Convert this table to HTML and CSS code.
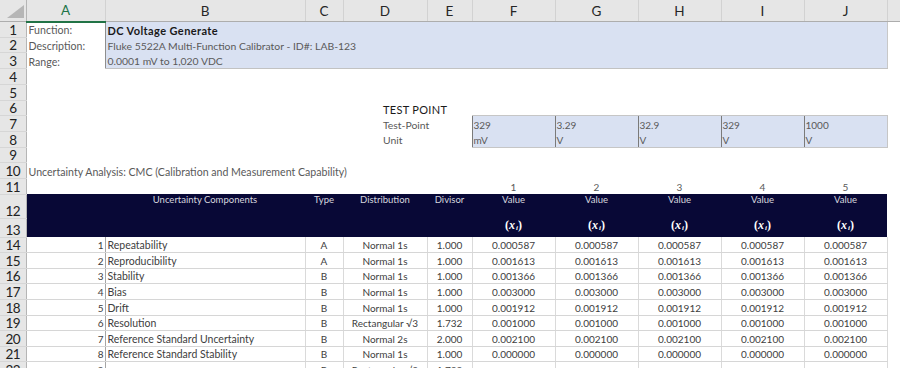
FILE: index.html
```html
<!DOCTYPE html>
<html lang="en">
<head>
    <meta charset="UTF-8">
    <meta name="viewport" content="width=device-width, initial-scale=1.0">
    <title>CMC Uncertainty - DC Voltage Generate</title>
    <link rel="stylesheet" href="styles.css">
</head>
<body>
    <table class="sheet">
        <colgroup>
            <col class="w-rh"><col class="w-a"><col class="w-b"><col class="w-c"><col class="w-d"><col class="w-e">
            <col class="w-v"><col class="w-v"><col class="w-v"><col class="w-v"><col class="w-v"><col class="w-k">
        </colgroup>
        <thead>
            <tr class="col-heads">
                <th class="corner"><svg width="26" height="21" viewBox="0 0 26 21"><polygon points="24,5 24,18 7,18" fill="#b6b6b6"/></svg></th>
                <th class="sel">A</th><th>B</th><th>C</th><th>D</th><th>E</th>
                <th>F</th><th>G</th><th>H</th><th>I</th><th>J</th><th></th>
            </tr>
        </thead>
        <tbody>
            <!-- 基本信息 -->
            <tr class="r">
                <th class="rh">1</th>
                <td class="lbl">Function:</td>
                <td class="fill fl title">DC Voltage Generate</td>
                <td class="fill"></td><td class="fill"></td><td class="fill"></td><td class="fill"></td>
                <td class="fill"></td><td class="fill"></td><td class="fill"></td><td class="fill fr"></td>
                <td class="k"></td>
            </tr>
            <tr class="r">
                <th class="rh">2</th>
                <td class="lbl">Description:</td>
                <td class="fill fl">Fluke 5522A Multi-Function Calibrator - ID#: LAB-123</td>
                <td class="fill"></td><td class="fill"></td><td class="fill"></td><td class="fill"></td>
                <td class="fill"></td><td class="fill"></td><td class="fill"></td><td class="fill fr"></td>
                <td class="k"></td>
            </tr>
            <tr class="r fill-end">
                <th class="rh">3</th>
                <td class="lbl">Range:</td>
                <td class="fill fl">0.0001 mV to 1,020 VDC</td>
                <td class="fill"></td><td class="fill"></td><td class="fill"></td><td class="fill"></td>
                <td class="fill"></td><td class="fill"></td><td class="fill"></td><td class="fill fr"></td>
                <td class="k"></td>
            </tr>
            <tr class="r"><th class="rh">4</th><td colspan="11"></td></tr>
            <tr class="r"><th class="rh">5</th><td colspan="11"></td></tr>

            <!-- 测试点 -->
            <tr class="r">
                <th class="rh">6</th>
                <td colspan="3"></td>
                <td class="tp-head">TEST POINT</td>
                <td colspan="7"></td>
            </tr>
            <tr class="r tp-top">
                <th class="rh">7</th>
                <td colspan="3"></td>
                <td class="tp-label">Test-Point</td>
                <td></td>
                <td class="tp">329</td><td class="tp">3.29</td><td class="tp">32.9</td><td class="tp">329</td><td class="tp tr">1000</td>
                <td class="k"></td>
            </tr>
            <tr class="r tp-bottom">
                <th class="rh">8</th>
                <td colspan="3"></td>
                <td class="tp-label">Unit</td>
                <td></td>
                <td class="tp">mV</td><td class="tp">V</td><td class="tp">V</td><td class="tp">V</td><td class="tp tr">V</td>
                <td class="k"></td>
            </tr>
            <tr class="r"><th class="rh">9</th><td colspan="11"></td></tr>
            <tr class="r">
                <th class="rh">10</th>
                <td class="lbl">Uncertainty Analysis: CMC (Calibration and Measurement Capability)</td>
                <td colspan="10"></td>
            </tr>
            <tr class="r">
                <th class="rh">11</th>
                <td colspan="5"></td>
                <td class="num">1</td><td class="num">2</td><td class="num">3</td><td class="num">4</td><td class="num">5</td>
                <td class="k"></td>
            </tr>

            <!-- 表头 -->
            <tr class="band-top">
                <th class="rh">12</th>
                <td class="band"></td>
                <td class="band">Uncertainty Components</td>
                <td class="band">Type</td>
                <td class="band">Distribution</td>
                <td class="band">Divisor</td>
                <td class="band">Value</td><td class="band">Value</td><td class="band">Value</td><td class="band">Value</td><td class="band">Value</td>
                <td class="k"></td>
            </tr>
            <tr class="band-bottom">
                <th class="rh">13</th>
                <td class="band" colspan="5"></td>
                <td class="band"><span class="xi">(<i>x</i><sub>i</sub>)</span></td>
                <td class="band"><span class="xi">(<i>x</i><sub>i</sub>)</span></td>
                <td class="band"><span class="xi">(<i>x</i><sub>i</sub>)</span></td>
                <td class="band"><span class="xi">(<i>x</i><sub>i</sub>)</span></td>
                <td class="band"><span class="xi">(<i>x</i><sub>i</sub>)</span></td>
                <td class="k"></td>
            </tr>

            <!-- 不确定度分量 -->
            <tr class="d">
                <th class="rh">14</th>
                <td class="ca">1</td><td class="cb">Repeatability</td><td class="cc">A</td><td class="cc">Normal 1s</td><td class="cc">1.000</td>
                <td class="cc">0.000587</td><td class="cc">0.000587</td><td class="cc">0.000587</td><td class="cc">0.000587</td><td class="cc">0.000587</td>
                <td class="k"></td>
            </tr>
            <tr class="d">
                <th class="rh">15</th>
                <td class="ca">2</td><td class="cb">Reproducibility</td><td class="cc">A</td><td class="cc">Normal 1s</td><td class="cc">1.000</td>
                <td class="cc">0.001613</td><td class="cc">0.001613</td><td class="cc">0.001613</td><td class="cc">0.001613</td><td class="cc">0.001613</td>
                <td class="k"></td>
            </tr>
            <tr class="d">
                <th class="rh">16</th>
                <td class="ca">3</td><td class="cb">Stability</td><td class="cc">B</td><td class="cc">Normal 1s</td><td class="cc">1.000</td>
                <td class="cc">0.001366</td><td class="cc">0.001366</td><td class="cc">0.001366</td><td class="cc">0.001366</td><td class="cc">0.001366</td>
                <td class="k"></td>
            </tr>
            <tr class="d">
                <th class="rh">17</th>
                <td class="ca">4</td><td class="cb">Bias</td><td class="cc">B</td><td class="cc">Normal 1s</td><td class="cc">1.000</td>
                <td class="cc">0.003000</td><td class="cc">0.003000</td><td class="cc">0.003000</td><td class="cc">0.003000</td><td class="cc">0.003000</td>
                <td class="k"></td>
            </tr>
            <tr class="d">
                <th class="rh">18</th>
                <td class="ca">5</td><td class="cb">Drift</td><td class="cc">B</td><td class="cc">Normal 1s</td><td class="cc">1.000</td>
                <td class="cc">0.001912</td><td class="cc">0.001912</td><td class="cc">0.001912</td><td class="cc">0.001912</td><td class="cc">0.001912</td>
                <td class="k"></td>
            </tr>
            <tr class="d">
                <th class="rh">19</th>
                <td class="ca">6</td><td class="cb">Resolution</td><td class="cc">B</td><td class="cc">Rectangular √3</td><td class="cc">1.732</td>
                <td class="cc">0.001000</td><td class="cc">0.001000</td><td class="cc">0.001000</td><td class="cc">0.001000</td><td class="cc">0.001000</td>
                <td class="k"></td>
            </tr>
            <tr class="d">
                <th class="rh">20</th>
                <td class="ca">7</td><td class="cb">Reference Standard Uncertainty</td><td class="cc">B</td><td class="cc">Normal 2s</td><td class="cc">2.000</td>
                <td class="cc">0.002100</td><td class="cc">0.002100</td><td class="cc">0.002100</td><td class="cc">0.002100</td><td class="cc">0.002100</td>
                <td class="k"></td>
            </tr>
            <tr class="d">
                <th class="rh">21</th>
                <td class="ca">8</td><td class="cb">Reference Standard Stability</td><td class="cc">B</td><td class="cc">Normal 1s</td><td class="cc">1.000</td>
                <td class="cc">0.000000</td><td class="cc">0.000000</td><td class="cc">0.000000</td><td class="cc">0.000000</td><td class="cc">0.000000</td>
                <td class="k"></td>
            </tr>
            <tr class="d">
                <th class="rh">22</th>
                <td class="ca">9</td><td class="cb"></td><td class="cc">B</td><td class="cc">Rectangular √3</td><td class="cc">1.732</td>
                <td class="cc"></td><td class="cc"></td><td class="cc"></td><td class="cc"></td><td class="cc"></td>
                <td class="k"></td>
            </tr>
        </tbody>
    </table>
</body>
</html>
```

FILE: styles.css
```css
body {
    margin: 0;
    background-color: #fff;
    font-family: Lato, "Liberation Sans", sans-serif;
    overflow: hidden;
}
.sheet {
    border-collapse: collapse;
    table-layout: fixed;
    width: 900px;
    font-size: 10px;
    color: #404040;
}
.sheet td, .sheet th {
    padding: 0 2px;
    white-space: nowrap;
    overflow: visible;
    vertical-align: bottom;
    font-weight: normal;
    line-height: 13px;
}
.w-rh { width: 26px; }
.w-a { width: 79px; }
.w-b { width: 200px; }
.w-c { width: 38px; }
.w-d { width: 84px; }
.w-e { width: 45px; }
.w-v { width: 83px; }
.w-k { width: 13px; }

/* 列标题 */
.col-heads th {
    height: 20px;
    padding: 0;
    background-color: #e6e6e6;
    border-right: 1px solid #d2d2d2;
    border-bottom: 1px solid #adadad;
    font-size: 13.5px;
    color: #262626;
    text-align: center;
    vertical-align: middle;
    line-height: 20px;
}
.col-heads th.sel {
    color: #217346;
    border-bottom: 2px solid #217346;
}
.col-heads th.corner {
    border-right-color: #b5b5b5;
}
.corner svg {
    display: block;
}

/* 行号 */
.sheet th.rh {
    padding: 0;
    background-color: #e6e6e6;
    border-right: 1px solid #b5b5b5;
    border-bottom: 1px solid #d6d6d6;
    font-size: 13.5px;
    letter-spacing: -0.6px;
    color: #222;
    text-align: center;
    vertical-align: bottom;
    line-height: 14px;
}
tr.r { height: 15.73px; }
tr.band-top { height: 24px; }
tr.band-bottom { height: 18.7px; }
tr.d { height: 15.6px; }

/* 基本信息 */
.lbl {
    font-size: 10.6px;
    color: #595959;
}
.fill {
    background-color: #d9e1f2;
    font-size: 10.4px;
    color: #595959;
}
.fill.fl {
    border-left: 1px solid #8e8e8e;
    padding-left: 2px;
}
.fill.fr {
    border-right: 1px solid #c8c8c8;
}
.fill-end .fill {
    border-bottom: 1px solid #c2c2c2;
}
.fill.title {
    font-size: 11px;
    letter-spacing: 0.4px;
    font-weight: bold;
    color: #1a1a1a;
}

/* 测试点 */
.tp-head {
    padding-left: 40px !important;
    font-size: 11px;
    letter-spacing: 0.3px;
    font-weight: bold;
    color: #1a1a1a;
}
.tp-label {
    padding-left: 40px !important;
    font-size: 10.4px;
    color: #595959;
}
.tp {
    background-color: #d9e1f2;
    border-left: 1px solid #7a7a7a;
    color: #595959;
    padding-left: 1px !important;
}
.tp.tr {
    border-right: 1px solid #c6c6c6;
}
.tp-top .tp {
    border-top: 1px solid #c6c6c6;
}
.tp-bottom .tp {
    border-bottom: 1px solid #c6c6c6;
}
.num {
    text-align: center;
    color: #595959;
}

/* 深色表头 */
.band {
    background-color: #080836;
    color: #d6d6de;
    font-size: 9.5px;
    text-align: center;
}
.band-top .band {
    vertical-align: top;
    line-height: 12px;
}
.band-bottom .band {
    vertical-align: top;
    line-height: 14px;
}
.xi {
    font-family: "Liberation Serif", serif;
    font-size: 12px;
    font-weight: bold;
    color: #fff;
}
.xi i {
    font-style: italic;
}
.xi sub {
    font-size: 7px;
    font-style: italic;
    margin-left: 1px;
    vertical-align: -1px;
}

/* 数据行 */
.d td {
    border-bottom: 1px solid #d6d6d6;
    border-right: 1px solid #dadada;
}
.d td.ca {
    text-align: right;
    padding-right: 1px;
    border-right-color: #a6a6a6;
}
.d td.cb {
    text-align: left;
    font-size: 10.5px;
}
.d td.cc {
    text-align: center;
}
.d td.k, .sheet td.k {
    border: none;
}
```
